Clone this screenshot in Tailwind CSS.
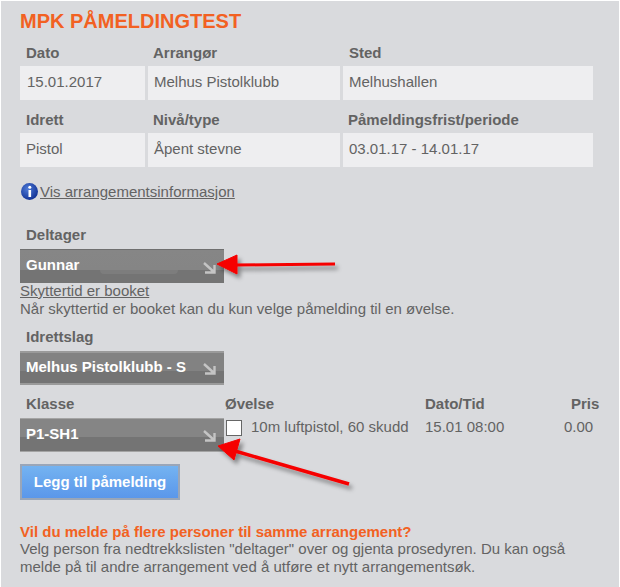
<!DOCTYPE html>
<html lang="en">

<head>
  <meta charset="UTF-8" />
  <title>MPK Påmeldingtest</title>
  <script src="https://cdn.jsdelivr.net/npm/@tailwindcss/browser@4"></script>
</head>

<body class="bg-white">
  <div class="relative w-[618px] h-[587px] mt-px ml-px bg-[#d9dadd] pl-[19px] text-[15px] leading-[17px] text-[#636363] font-['Liberation_Sans',Arial,sans-serif] overflow-hidden">
    <h1 class="pt-[9px] text-[20px] leading-[23px] font-bold text-[#f26122]">MPK PÅMELDINGTEST</h1>

    <!-- Arrangement info -->
    <div class="mt-[11px] grid grid-cols-[125px_192px_250px] gap-x-[3px] w-[573px]">
      <div class="pl-[6px] h-[22px] font-bold">Dato</div>
      <div class="pl-[5px] h-[22px] font-bold">Arrangør</div>
      <div class="pl-[6px] h-[22px] font-bold">Sted</div>
      <div class="h-[34px] pl-[7px] pb-[4px] flex items-center bg-[#eeeef0]">15.01.2017</div>
      <div class="h-[34px] pl-[6px] pb-[4px] flex items-center bg-[#eeeef0]">Melhus Pistolklubb</div>
      <div class="h-[34px] pl-[6px] pb-[4px] flex items-center bg-[#eeeef0]">Melhushallen</div>
      <div class="pl-[6px] pt-[11px] h-[33px] font-bold">Idrett</div>
      <div class="pl-[5px] pt-[11px] h-[33px] font-bold">Nivå/type</div>
      <div class="pl-[5px] pt-[11px] h-[33px] font-bold">Påmeldingsfrist/periode</div>
      <div class="h-[34px] pl-[6px] pb-[4px] flex items-center bg-[#eeeef0]">Pistol</div>
      <div class="h-[34px] pl-[6px] pb-[4px] flex items-center bg-[#eeeef0]">Åpent stevne</div>
      <div class="h-[34px] pl-[6px] pb-[4px] flex items-center bg-[#eeeef0]">03.01.17 - 14.01.17</div>
    </div>

    <div class="mt-[15px] flex items-center h-[19px]">
      <svg class="w-[20px] h-[19px] shrink-0" viewBox="0 0 20 19">
        <defs>
          <radialGradient id="infoBall" cx="40%" cy="35%" r="70%">
            <stop offset="0" stop-color="#4f7bd8" />
            <stop offset="1" stop-color="#0f2f92" />
          </radialGradient>
        </defs>
        <circle cx="9.5" cy="9.5" r="8.5" fill="url(#infoBall)" />
        <rect x="8.5" y="8" width="2.6" height="7" fill="#fff" />
        <circle cx="9.8" cy="5.3" r="1.5" fill="#fff" />
      </svg>
      <a href="#" class="underline">Vis arrangementsinformasjon</a>
    </div>

    <!-- Deltager -->
    <div class="mt-[25px] pl-[6px] h-[23px] font-bold">Deltager</div>
    <div class="relative w-[204px] h-[34px] flex items-center pl-[6px] pb-[4px] text-white font-bold border-t border-[#6f6f6f] bg-[linear-gradient(#868686_0,#858585_60%,#747474_60%,#747474_100%)]">
      Gunnar
      <div class="absolute left-[80px] top-[20px] w-[78px] h-[4px] rounded-b bg-[#7d7d7d]"></div>
      <svg class="absolute right-[8px] top-[12px] w-[14px] h-[12px]" viewBox="0 0 14 12" fill="none" stroke="#c4c4c4" stroke-width="2.4">
        <path d="M2 1 L12 10 M3 10.5 H12.5 V3" />
      </svg>
    </div>
    <a href="#" class="block -mt-px underline">Skyttertid er booket</a>
    <p class="mt-px">Når skyttertid er booket kan du kun velge påmelding til en øvelse.</p>

    <!-- Idrettslag -->
    <div class="mt-[11px] pl-[6px] h-[23px] font-bold">Idrettslag</div>
    <div class="relative w-[204px] h-[34px] flex items-center pl-[6px] pb-[4px] text-white font-bold border-t-2 border-b-2 border-[#9a9a9a] bg-[linear-gradient(#828282_0,#828282_60%,#747474_60%,#747474_100%)]">
      Melhus Pistolklubb - S
      <svg class="absolute right-[8px] top-[10px] w-[14px] h-[12px]" viewBox="0 0 14 12" fill="none" stroke="#c4c4c4" stroke-width="2.4">
        <path d="M2 1 L12 10 M3 10.5 H12.5 V3" />
      </svg>
    </div>

    <!-- Klasse / Øvelse -->
    <div class="mt-[10px] grid grid-cols-[205px_200px_139px_36px] w-[580px]">
      <div class="pl-[6px] h-[23px] font-bold">Klasse</div>
      <div class="h-[23px] font-bold">Øvelse</div>
      <div class="h-[23px] font-bold">Dato/Tid</div>
      <div class="pl-[7px] h-[23px] font-bold">Pris</div>
      <div class="relative w-[204px] h-[34px] flex items-center pl-[6px] pb-[3px] text-white font-bold border-t border-b border-[#a4a4a4] bg-[linear-gradient(#858585_0,#858585_55%,#747474_55%,#747474_100%)]">
        P1-SH1
        <svg class="absolute right-[8px] top-[11px] w-[14px] h-[12px]" viewBox="0 0 14 12" fill="none" stroke="#c4c4c4" stroke-width="2.4">
          <path d="M2 1 L12 10 M3 10.5 H12.5 V3" />
        </svg>
      </div>
      <div class="flex items-start">
        <span class="ml-px mt-[2px] w-[16px] h-[16px] bg-white border border-[#666]"></span>
        <span class="ml-[9px]">10m luftpistol, 60 skudd</span>
      </div>
      <div>15.01 08:00</div>
      <div>0.00</div>
    </div>

    <button class="mt-[12px] block w-[160px] h-[36px] pb-[2px] text-center text-white font-bold border-2 border-[#9aa6b8] bg-[linear-gradient(#74b3f1,#5b97ea)]">Legg til påmelding</button>

    <p class="mt-[23px] font-bold text-[#f26122]">Vil du melde på flere personer til samme arrangement?</p>
    <p class="w-[580px] leading-[17.5px]">Velg person fra nedtrekkslisten "deltager" over og gjenta prosedyren. Du kan også melde på til andre arrangement ved å utføre et nytt arrangementsøk.</p>

    <!-- Annotation arrows -->
    <svg class="absolute left-0 top-0 w-[618px] h-[587px] pointer-events-none" viewBox="0 0 618 587">
      <defs>
        <filter id="arrowShadow" x="-20%" y="-50%" width="140%" height="200%">
          <feDropShadow dx="3" dy="4" stdDeviation="2" flood-color="#000" flood-opacity="0.4" />
        </filter>
      </defs>
      <g fill="#f60000" stroke="#f60000" filter="url(#arrowShadow)">
        <path d="M334 263 L234 264" stroke-width="3" />
        <path d="M216 263 L236 254 L236 273 Z" stroke-width="1" />
        <path d="M348 483 L234 450" stroke-width="3.5" />
        <path d="M217 445 L239 438 L233 459 Z" stroke-width="1" />
      </g>
    </svg>
  </div>
</body>

</html>
